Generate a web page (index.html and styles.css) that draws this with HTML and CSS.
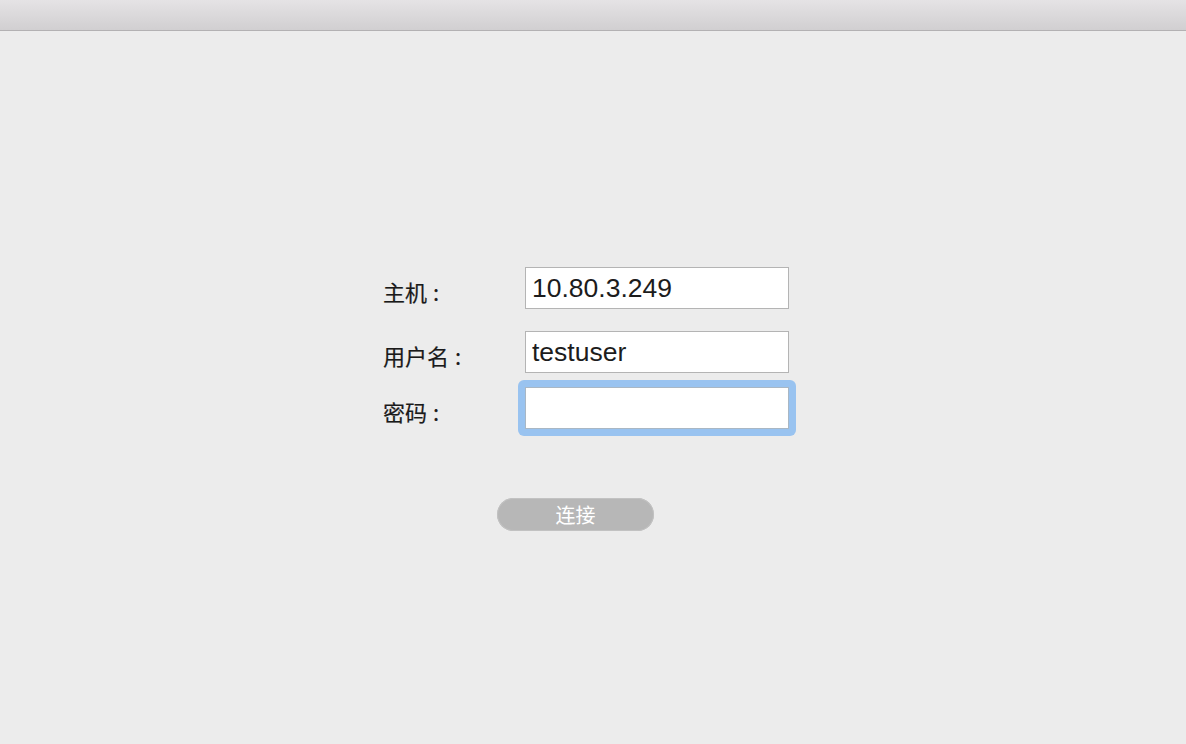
FILE: index.html
```html
<!DOCTYPE html>
<html lang="zh">
<head>
<meta charset="utf-8">
<title>连接</title>
<link rel="stylesheet" href="styles.css">
</head>
<body>
<div class="titlebar"></div>
<main class="content">
  <form class="login">
    <div class="row row-host">
      <label class="label" for="host">主机<span class="colon">:</span></label>
      <input class="field" id="host" type="text" value="10.80.3.249">
    </div>
    <div class="row row-user">
      <label class="label" for="user">用户名<span class="colon">:</span></label>
      <input class="field" id="user" type="text" value="testuser">
    </div>
    <div class="row row-pass">
      <label class="label" for="pass">密码<span class="colon">:</span></label>
      <span class="focus-ring"><input class="field" id="pass" type="password" value=""></span>
    </div>
    <div class="actions">
      <button class="connect" type="button">连接</button>
    </div>
  </form>
</main>
</body>
</html>
```
FILE: styles.css
```css
html, body {
  margin: 0;
  padding: 0;
  background: #ececec;
  width: 1186px;
  height: 744px;
  overflow: hidden;
}
body {
  font-family: "Noto Sans CJK SC", "Liberation Sans", sans-serif;
  color: #222;
}
.titlebar {
  height: 30px;
  background: linear-gradient(to bottom, #e5e3e5, #d1cfd1);
  border-bottom: 1px solid #b3b1b3;
}
.content {
  padding-top: 236px;
  padding-left: 383px;
}
.login {
  display: flex;
  flex-direction: column;
  width: 420px;
}
.row {
  display: flex;
  align-items: center;
}
.row-user { margin-top: 22px; }
.row-pass { margin-top: 14px; }
.label {
  width: 142px;
  font-size: 22px;
  line-height: 30px;
  padding-top: 5px;
  color: #1a1a1a;
  font-family: "Noto Sans CJK SC", sans-serif;
  -webkit-text-stroke: 0.2px #1a1a1a;
}
.colon {
  margin-left: 6px;
}
.field {
  box-sizing: border-box;
  width: 264px;
  height: 42px;
  margin: 0;
  padding: 0 6px;
  border: 1px solid #b4b4b4;
  background: #fff;
  font-family: "Liberation Sans", "Noto Sans CJK SC", sans-serif;
  font-size: 26.5px;
  color: #1c1c1c;
  outline: none;
}
.focus-ring {
  display: block;
  margin: -7px;
  padding: 7px;
  border-radius: 6px;
  background: #99c3f0;
}
.focus-ring .field {
  display: block;
  border-color: #a9b7c4;
}
.actions {
  margin-top: 69px;
  padding-left: 114px;
}
.connect {
  width: 157px;
  height: 33px;
  border: none;
  border-radius: 17px;
  background: #b7b7b7;
  box-shadow: inset 0 0 0 1px #c2c2c2;
  color: #fff;
  font-family: "Noto Sans CJK SC", sans-serif;
  font-size: 20px;
  line-height: 33px;
  padding: 0;
}
```
